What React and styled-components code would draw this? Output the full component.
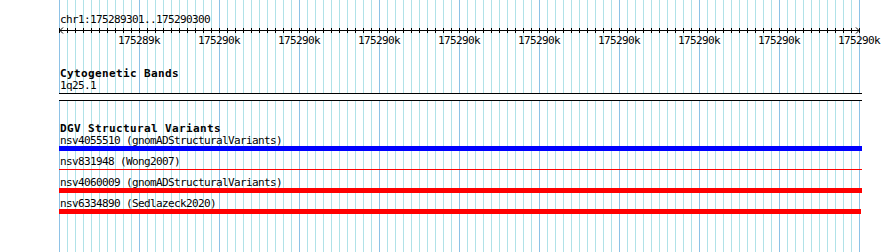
import styled, { createGlobalStyle } from "styled-components";

const GlobalStyle = createGlobalStyle`
  html, body {
    margin: 0;
    padding: 0;
    background: #ffffff;
    overflow: hidden;
  }
`;

const ticks = Array.from({ length: 101 }, (_, i) => i * 8);
const labels = [
  "175289k",
  "175290k",
  "175290k",
  "175290k",
  "175290k",
  "175290k",
  "175290k",
  "175290k",
  "175290k",
  "175290k",
];

const variants = [
  { name: "nsv4055510", source: "gnomADStructuralVariants", color: "#0000ff", thick: true },
  { name: "nsv831948", source: "Wong2007", color: "#ff0000", thick: false },
  { name: "nsv4060009", source: "gnomADStructuralVariants", color: "#ff0000", thick: true },
  { name: "nsv6334890", source: "Sedlazeck2020", color: "#ff0000", thick: true, short: true },
];

function Ruler() {
  return (
    <RulerBox>
      <Text>chr1:175289301..175290300</Text>
      <svg width="803" height="9" viewBox="0 0 803 9">
        <line x1="1" y1="4.5" x2="801" y2="4.5" stroke="#000" strokeWidth="1" />
        {ticks.map((x) => (
          <line key={x} x1={x + 0.5} y1="2" x2={x + 0.5} y2="7" stroke="#000" strokeWidth="1" />
        ))}
        <polyline points="4,1.5 1,4.5 4,7.5" fill="none" stroke="#000" strokeWidth="1" />
        <polyline points="797,1.5 800,4.5 797,7.5" fill="none" stroke="#000" strokeWidth="1" />
      </svg>
      <LabelRow>
        {labels.map((l, i) => (
          <TickLabel key={i}>{l}</TickLabel>
        ))}
      </LabelRow>
    </RulerBox>
  );
}

export default function App() {
  return (
    <>
      <GlobalStyle />
      <Page>
        <Canvas>
          <Ruler />
          <Track>
            <TrackTitle>Cytogenetic Bands</TrackTitle>
            <Text>1q25.1</Text>
            <Band />
          </Track>
          <Track $gap="22px">
            <TrackTitle>DGV Structural Variants</TrackTitle>
            {variants.map((v) => (
              <Feature key={v.name}>
                <Text>
                  {v.name} ({v.source})
                </Text>
                <Slot>
                  <Bar $color={v.color} $thick={v.thick} $short={v.short} />
                </Slot>
              </Feature>
            ))}
          </Track>
        </Canvas>
      </Page>
    </>
  );
}

const Page = styled.div`
  width: 890px;
  height: 252px;
  padding-left: 59px;
  box-sizing: border-box;
  font-family: "DejaVu Sans Mono", "Liberation Mono", monospace;
  color: #000;
`;

const Canvas = styled.div`
  width: 803px;
  height: 252px;
  display: flex;
  flex-direction: column;
  background-image:
    linear-gradient(to right, #8ec2e6 1px, transparent 1px),
    linear-gradient(to right, #b0e2e8 1px, transparent 1px);
  background-size: 80px 100%, 8px 100%;
  background-repeat: repeat-x;
  background-clip: content-box;
  padding-right: 2px;
  box-sizing: border-box;
`;

const RulerBox = styled.div`
  display: flex;
  flex-direction: column;
  padding-top: 14px;

  svg {
    display: block;
    margin-top: 1px;
  }
`;

const Text = styled.div`
  font-size: 11px;
  letter-spacing: -0.62px;
  line-height: 11px;
  height: 11px;
  padding-left: 1px;
  white-space: nowrap;
`;

const LabelRow = styled.div`
  display: flex;
  margin-left: 40px;
`;

const TickLabel = styled.span`
  flex: 0 0 80px;
  text-align: center;
  font-size: 11px;
  letter-spacing: -0.62px;
  line-height: 11px;
`;

const Track = styled.div`
  display: flex;
  flex-direction: column;
  margin-top: ${(p) => p.$gap || "22px"};
`;

const TrackTitle = styled.div`
  font-size: 11px;
  font-weight: bold;
  letter-spacing: 0.38px;
  line-height: 12px;
  padding-left: 1px;
  white-space: nowrap;
`;

const Band = styled.div`
  height: 6px;
  margin-top: 2px;
  background: #ffffff;
  border-top: 1px solid #000;
  border-bottom: 1px solid #000;
  margin-right: -2px;
`;

const Feature = styled.div`
  display: flex;
  flex-direction: column;
`;

const Slot = styled.div`
  height: 5px;
  padding-bottom: 5px;
  display: flex;
  align-items: center;
`;

const Bar = styled.div`
  flex: none;
  width: ${(p) => (p.$short ? "802px" : "803px")};
  height: ${(p) => (p.$thick ? "5px" : "1px")};
  background: ${(p) => p.$color};
`;
